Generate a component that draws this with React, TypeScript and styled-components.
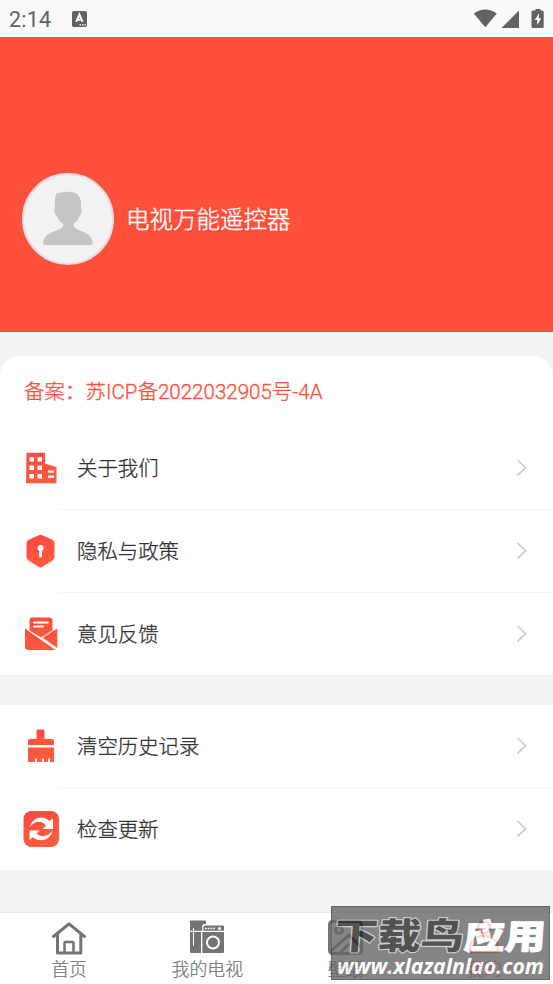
import React from "react";
import styled, { createGlobalStyle } from "styled-components";

const GlobalStyle = createGlobalStyle`
  * { box-sizing: border-box; }
  body { margin: 0; background: #f3f3f3; }
`;

const Screen = styled.div`
  position: relative;
  display: flex;
  flex-direction: column;
  width: 553px;
  height: 984px;
  overflow: hidden;
  background: #f3f3f3;
  font-family: Roboto, "Noto Sans CJK SC", sans-serif;
  color: #333;
`;

const StatusBar = styled.header`
  display: flex;
  align-items: center;
  height: 37px;
  padding: 0 9px;
  background: #fafafa;
  color: #626262;
  svg { display: block; }
`;

const Clock = styled.span`
  width: 63px;
  font-size: 21.5px;
  letter-spacing: 0.25px;
  line-height: 37px;
  padding-top: 2px;
`;

const StatusIcons = styled.div`
  display: flex;
  align-items: center;
  margin-left: auto;
`;

const Banner = styled.section`
  display: flex;
  align-items: center;
  height: 295px;
  padding: 67px 22px 0;
  gap: 12px;
  background: #ff503c;
`;

const Avatar = styled.div`
  width: 92px;
  height: 92px;
  margin-top: 1px;
  border-radius: 50%;
  border: 2px solid #dedede;
  background: #f2f2f2;
  overflow: hidden;
  svg { display: block; }
`;

const Title = styled.h1`
  margin: 0;
  padding-top: 4px;
  color: #fff;
  font-size: 23.5px;
  line-height: 32px;
  font-weight: 300;
  -webkit-text-stroke: 0.35px currentColor;
`;

const Card = styled.section<{ $rounded?: boolean }>`
  margin-top: ${(p) => (p.$rounded ? 24 : 30)}px;
  background: #fff;
  border-radius: ${(p) => (p.$rounded ? "20px 20px 0 0" : "0")};
`;

const Filing = styled.p`
  margin: 0;
  height: 71px;
  padding: 0 24px;
  line-height: 72px;
  font-size: 20.4px;
  font-weight: 300;
  letter-spacing: 0.09px;
  color: #ff503c;
  -webkit-text-stroke: 0.35px currentColor;
`;

const Row = styled.div<{ $last?: boolean }>`
  display: flex;
  align-items: center;
  height: ${(p) => (p.$last ? 82 : 83)}px;
  padding-left: 23px;
`;

const RowIcon = styled.span<{ $last?: boolean }>`
  width: 36px;
  height: 36px;
  margin-bottom: ${(p) => (p.$last ? 0 : 2)}px;
  svg { display: block; }
`;

const RowBody = styled.div<{ $line?: boolean }>`
  display: flex;
  align-items: center;
  justify-content: space-between;
  flex: 1;
  height: 100%;
  padding: 0 25px 0 18px;
  border-bottom: 1px solid ${(p) => (p.$line ? "#f5f5f5" : "transparent")};
`;

const RowLabel = styled.span`
  padding-top: 2px;
  font-size: 20.4px;
  line-height: 30px;
  font-weight: 300;
  -webkit-text-stroke: 0.3px currentColor;
`;

const TabBar = styled.nav`
  display: grid;
  grid-template-columns: repeat(4, 1fr);
  height: 72px;
  margin-top: auto;
  border-top: 1px solid #e9e9e9;
  background: #fff;
`;

const Tab = styled.div<{ $active?: boolean }>`
  display: flex;
  flex-direction: column;
  align-items: center;
  padding-top: 7px;
  color: ${(p) => (p.$active ? "#ff503c" : "#747474")};
  svg { display: block; }
`;

const TabLabel = styled.span`
  padding-top: 2px;
  font-size: 17.9px;
  line-height: 24px;
  font-weight: 300;
  -webkit-text-stroke: 0.2px currentColor;
`;

const Watermark = styled.aside`
  position: absolute;
  left: 330.5px;
  top: 906px;
  width: 219.5px;
  height: 74px;
  border: 1px solid #404040;
  background: #656565;
  opacity: 0.79;
  svg { display: block; overflow: visible; }
`;

const Gradient = () => (
  <svg width="0" height="0" style={{ position: "absolute" }} aria-hidden="true">
    <linearGradient id="warm" x1="0" y1="0" x2="0.4" y2="1">
      <stop offset="0" stopColor="#ff4842" />
      <stop offset="1" stopColor="#ff5b3d" />
    </linearGradient>
  </svg>
);

const Building = () => (
  <svg width="36" height="36" viewBox="0 0 36 36">
    <path fill="url(#warm)" d="M3.500 2.700h18.500v11l11.500 3.300v16.300H3z" />
    <path fill="#fff" d="M6.500 7h4.500V11.500H6.500zM14.500 7h4.500V11.500H14.500zM6.500 15.500h4.500V20H6.500zM14.500 15.500h4.500V20H14.500zM6.500 24h4.500v4.500H6.500zM14.500 24h4.500v4.500H14.500zM25 20.500h6v2.300h-6zM25 25.500h6v2.300h-6z" />
  </svg>
);
const Shield = () => (
  <svg width="36" height="36" viewBox="0 0 36 36">
    <path fill="url(#warm)" d="M15.8 2.200q1.700-.9 3.400 0l9.800 4.300q2.500 1 2.500 3.500v14q0 2-1.800 3.200l-10.400 6.700q-1.800 1.200-3.600 0l-10.400-6.700Q3.500 26 3.500 24V10Q3.500 7.500 6 6.500z" />
    <circle cx="17.600" cy="15" r="3" fill="#fff" />
    <path d="M17.600 16v7" stroke="#fff" strokeWidth="2.800" strokeLinecap="round" />
  </svg>
);
const Mail = () => (
  <svg width="36" height="36" viewBox="0 0 36 36">
    <path fill="url(#warm)" d="M6.500 14.500V4.500q0-3 3-3h17q3 0 3 3v10L18 21.500z" />
    <path d="M11 6.500h14M11 10.500h9" stroke="#fff" strokeWidth="1.800" strokeLinecap="round" />
    <path fill="url(#warm)" d="M2 12.500 32.500 34H5q-3 0-3-3zM34.300 12.500V32L19.500 21.700z" />
  </svg>
);
const Brush = () => (
  <svg width="36" height="36" viewBox="0 0 36 36">
    <path fill="url(#warm)" d="M15 1.500h5q1.500 0 1.500 1.500v8H29q2 0 2 2v4H5v-4q0-2 2-2h6.500V3q0-1.500 1.500-1.500zM5 19.500h26V33q0 1-1 1h-3v-3.500h-2V34h-4v-3.500h-2V34h-5v-3.500h-2V34H6q-1 0-1-1z" />
  </svg>
);
const Refresh = () => (
  <svg width="36" height="36" viewBox="0 0 36 36">
    <rect x=".5" y="0" width="35.500" height="36" rx="8" fill="url(#warm)" />
    <path fill="#fff" d="M7 16C9 6 21 3.500 26.500 10L30 7.500V18H19.500l3.500-3.500C18 8.500 11 10 7 16zM29.500 19.500C28 29 16 32.500 10 26L6.500 29V19.500h10L13.500 22.800C19 27 25 25.500 29.500 19.500z" />
  </svg>
);
const Chevron = () => (
  <svg width="12" height="18" viewBox="0 0 12 18">
    <path d="M1.500 1 9.600 8.700l-8.100 7.700" fill="none" stroke="#c9c9c9" strokeWidth="1.500" />
  </svg>
);

const House = () => (
  <svg width="36" height="36" viewBox="0 0 36 36" fill="none" stroke="currentColor" strokeLinejoin="round" strokeLinecap="round">
    <path d="M2.500 16.500 18 3.800l15.500 12.700M6.500 15v18h23.300V15" strokeWidth="3" />
    <path d="M13.500 32v-9q0-1 1-1h7q1 0 1 1v9" strokeWidth="2.500" />
  </svg>
);
const Appliances = () => (
  <svg width="36" height="36" viewBox="0 0 36 36">
    <path fill="currentColor" d="M2 .5h14q1 0 1 1V4h-2.500q-1.300 1-1.300 2.500v4.300H1v-9.300q0-1 1-1zM1 12h11v21H2q-1 0-1-1zM16.500 5.500H34q1 0 1 1v4.300H14.500V7q0-1.500 2-1.500zM13.200 12H35v20q0 1-1 1H13.200z" />
    <path d="M4.500 8v18M12.700 13v20" stroke="#fff" strokeWidth="1" />
    <circle cx="24" cy="22.500" r="6" fill="none" stroke="#fff" strokeWidth="2" />
    <circle cx="30.500" cy="8.500" r="1.600" fill="#fff" />
    <path d="M16 8.500h10" stroke="#fff" strokeWidth="1.500" strokeDasharray="1.700 1" />
  </svg>
);
const Picture = () => (
  <svg width="36" height="36" viewBox="0 0 36 36" fill="none" stroke="currentColor" strokeWidth="3">
    <rect x="1.500" y="1.500" width="32" height="32" rx="3" />
    <circle cx="11" cy="10" r="3.500" />
    <path d="m3 31 18-16 13 13M12 33 21 24" />
  </svg>
);
const Person = () => (
  <svg width="36" height="36" viewBox="0 0 36 36" fill="none" stroke="currentColor" strokeWidth="2.500">
    <circle cx="18" cy="7.500" r="6" />
    <path d="M4 32v-3C4 19 11 16 18 16s14 3 14 13v3z" strokeLinejoin="round" />
  </svg>
);

const groups = [
  [
    { label: "关于我们", Icon: Building },
    { label: "隐私与政策", Icon: Shield },
    { label: "意见反馈", Icon: Mail },
  ],
  [
    { label: "清空历史记录", Icon: Brush },
    { label: "检查更新", Icon: Refresh },
  ],
];

const tabs = [
  { label: "首页", Icon: House },
  { label: "我的电视", Icon: Appliances },
  { label: "壁纸", Icon: Picture },
  { label: "我的", Icon: Person, active: true },
];

export default function App() {
  return (
    <Screen>
      <GlobalStyle />
      <Gradient />
      <StatusBar>
        <Clock>2:14</Clock>
        <svg width="15" height="16" viewBox="0 0 15 16">
          <rect width="15" height="16" rx="1.800" fill="#626262" />
          <path d="m4.200 10.800 3.200-7.300 3.200 7.300M5.200 8.700h4.500" fill="none" stroke="#fff" strokeWidth="2" />
          <path d="M7.500 13.800h1.500m1 0h1.500m1 0H14" stroke="#fff" strokeWidth="1.300" />
        </svg>
        <StatusIcons>
          <svg width="71" height="20" viewBox="0 0 71 20" fill="#626262">
            <path d="M.8 4.500Q12.300-3.500 23.800 4.500L12.300 18.300zM46 1.500v17.500H28.500zM59.500 1.500h3V0h5v1.500h2q1.200 0 1.200 1.500V17.500q0 1.500-1.500 1.500h-9.200Q58.500 19 58.500 17.500V3q0-1.500 1-1.500z" />
            <path fill="#fff" d="m66.200 4-4.500 7h2.500v5l4-6.800h-2.500z" />
          </svg>
        </StatusIcons>
      </StatusBar>
      <Banner>
        <Avatar>
          <svg width="88" height="88" viewBox="0 0 88 88">
            <path fill="#c5c5c5" d="M32 18.300C36 18 39 16.700 44 16.700c9 0 13 4.500 13 11.300v5c1.500 1 .5 7.500-1.500 8-1.500 4-3.500 6-6 8v2c3 6 19.200 5 19.200 17.500q0 1.500-1.500 1.500H21q-1.700 0-1.700-1.500C19.300 56 36 57 39.300 51v-2c-3-2-5-4-6.500-8-2-.5-3.500-7-2-8l.2-9c0-2 .5-3 1.500-3.700z" />
          </svg>
        </Avatar>
        <Title>电视万能遥控器</Title>
      </Banner>
      {groups.map((rows, g) => (
        <Card key={g} $rounded={g === 0}>
          {g === 0 && <Filing>备案：苏ICP备2022032905号-4A</Filing>}
          {rows.map(({ label, Icon }, i) => {
            const last = i === rows.length - 1;
            return (
              <Row key={label} $last={last}>
                <RowIcon $last={last}><Icon /></RowIcon>
                <RowBody $line={!last}>
                  <RowLabel>{label}</RowLabel>
                  <Chevron />
                </RowBody>
              </Row>
            );
          })}
        </Card>
      ))}
      <TabBar>
        {tabs.map(({ label, Icon, active }) => (
          <Tab key={label} $active={active}>
            <Icon />
            <TabLabel>{label}</TabLabel>
          </Tab>
        ))}
      </TabBar>
      <Watermark>
        <svg width="218" height="72" viewBox="0 0 218 72">
          <g fontFamily="'Noto Sans CJK SC', sans-serif" fontWeight="900" fontSize="43" strokeLinejoin="round" paintOrder="stroke" transform="translate(5 42) skewX(-4) scale(1 .84)">
            <text x="-3" textLength="129" fill="#242424" stroke="#c4c4c4" strokeWidth="2.600">下载鸟</text>
            <text x="126" textLength="82" fontSize="41" fill="#fff" stroke="#fff" strokeWidth="1">应用</text>
          </g>
          <text x="5" y="67" textLength="207" lengthAdjust="spacingAndGlyphs" fontFamily="'Open Sans', sans-serif" fontWeight="700" fontStyle="italic" fontSize="21" fill="#fff">www.xlazalnlao.com</text>
        </svg>
      </Watermark>
    </Screen>
  );
}
